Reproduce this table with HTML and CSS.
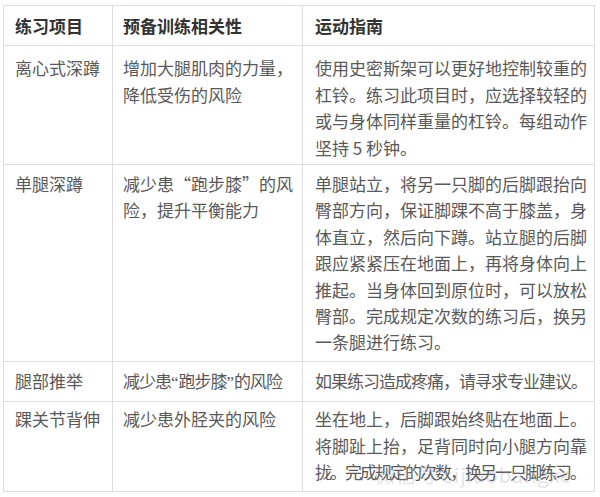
FILE: index.html
```html
<!DOCTYPE html>
<html lang="zh">
<head>
<meta charset="utf-8">
<link rel="stylesheet" href="styles.css">
</head>
<body>
<div class="wrap">
<table class="tbl">
  <colgroup>
    <col class="c1"><col class="c2"><col class="c3">
  </colgroup>
  <thead>
    <tr><th>练习项目</th><th>预备训练相关性</th><th>运动指南</th></tr>
  </thead>
  <tbody>
    <tr class="r1">
      <td>离心式深蹲</td>
      <td>增加大腿肌肉的力量，降低受伤的风险</td>
      <td>使用史密斯架可以更好地控制较重的杠铃。练习此项目时，应选择较轻的或与身体同样重量的杠铃。每组动作坚持 5 秒钟。</td>
    </tr>
    <tr class="r2">
      <td>单腿深蹲</td>
      <td>减少患“跑步膝”的风险，提升平衡能力</td>
      <td>单腿站立，将另一只脚的后脚跟抬向臀部方向，保证脚踝不高于膝盖，身体直立，然后向下蹲。站立腿的后脚跟应紧紧压在地面上，再将身体向上推起。当身体回到原位时，可以放松臀部。完成规定次数的练习后，换另一条腿进行练习。</td>
    </tr>
    <tr class="r3">
      <td>腿部推举</td>
      <td class="tight">减少患<span class="q">“</span>跑步膝<span class="q">”</span>的风险</td>
      <td class="tight">如果练习造成疼痛，请寻求专业建议。</td>
    </tr>
    <tr class="r4">
      <td>踝关节背伸</td>
      <td>减少患外胫夹的风险</td>
      <td>坐在地上，后脚跟始终贴在地面上。<br>将脚趾上抬，足背同时向小腿方向靠<br><span class="squeeze">拢。完成规定的次数，换另一只脚练习。</span></td>
    </tr>
  </tbody>
</table>
<div class="mark">微信号 sijiaobangxe</div>
</div>
</body>
</html>
```

FILE: styles.css
```css
html, body {
  margin: 0;
  padding: 0;
  background: #ffffff;
}
body {
  padding: 5px 0 0 3px;
  font-family: "Noto Sans CJK SC", "Noto Sans", sans-serif;
}
.wrap {
  position: relative;
  width: 591px;
}
.tbl {
  border-collapse: collapse;
  table-layout: fixed;
  width: 591px;
  font-size: 17px;
  line-height: 26.4px;
  color: #595959;
}
.c1 { width: 109px; }
.c2 { width: 190px; }
.c3 { width: 292px; }
.tbl th, .tbl td {
  border: 1px solid #dcdce2;
  padding: 6px 6px 6px 11px;
  text-align: left;
  vertical-align: top;
  word-break: break-all;
}
.tbl th {
  font-weight: 700;
  color: #333333;
  padding-top: 7px;
  padding-bottom: 6px;
}
.tbl td:nth-child(2), .tbl th:nth-child(2) { padding-left: 10px; }
.tbl td:nth-child(3), .tbl th:nth-child(3) { padding-left: 12px; }
.r1 td { padding-top: 9px; padding-bottom: 3px; }
.r2 td { padding-top: 6px; padding-bottom: 5px; }
.r3 td { padding-top: 6px; padding-bottom: 5px; }
.r4 td { padding-top: 4px; padding-bottom: 5px; }
.tbl td.tight {
  white-space: nowrap;
  letter-spacing: -1px;
}
.q {
  font-family: "Liberation Serif", serif;
  letter-spacing: 0;
}
.squeeze {
  white-space: nowrap;
  letter-spacing: -2px;
}
.mark {
  position: absolute;
  left: 372px;
  top: 455px;
  font-size: 20px;
  color: rgba(150, 155, 170, 0.3);
  letter-spacing: 1px;
  white-space: nowrap;
}
```
